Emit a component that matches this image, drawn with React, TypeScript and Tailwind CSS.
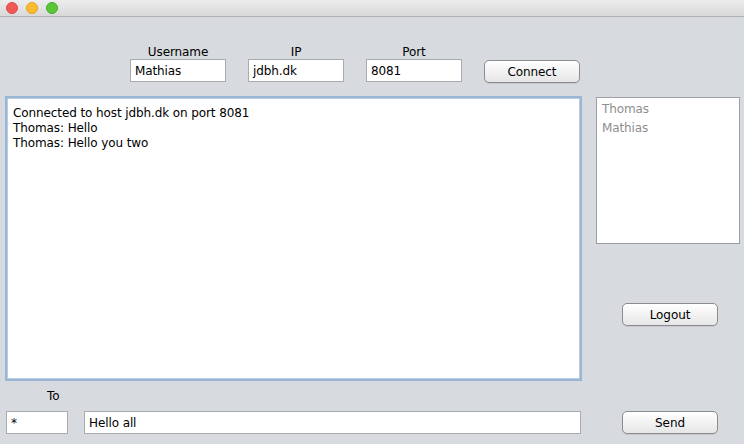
import React from "react";

const font = { fontFamily: '"Lucida Grande", "DejaVu Sans", sans-serif' };

function Field({ value, className }: { value: string; className: string }) {
	return (
		<div
			className={`h-[23px] bg-white border border-[#a9abae] px-[4px] flex items-center text-[12px] text-black ${className}`}
		>
			{value}
		</div>
	);
}

function Button({ label, className }: { label: string; className: string }) {
	return (
		<div
			className={`h-[23px] w-[96px] rounded-[5px] border border-[#8c8c8c] bg-gradient-to-b from-white to-[#e6e6e6] flex items-center justify-center text-[12px] text-black shadow-[0_1px_0_rgba(0,0,0,0.08)] ${className}`}
		>
			{label}
		</div>
	);
}

export default function App() {
	return (
		<div className="w-[744px] h-[444px] bg-[#d7dadf] overflow-hidden tracking-[-0.1px]" style={font}>
			{/* title bar */}
			<div className="h-[17px] bg-gradient-to-b from-[#ededed] to-[#d9d9d9] border-b border-[#b1b1b1] flex items-center gap-[8px] pl-[6px]">
				<span className="w-[12px] h-[12px] rounded-full bg-[#f0595a] border border-[#dd4a4a]" />
				<span className="w-[12px] h-[12px] rounded-full bg-[#fbbb2f] border border-[#e0a325]" />
				<span className="w-[12px] h-[12px] rounded-full bg-[#5ac638] border border-[#48ac2c]" />
			</div>

			{/* connection row */}
			<div className="flex items-end gap-[22px] pl-[130px] pt-[29px]">
				<div className="flex flex-col items-center">
					<span className="text-[12px] leading-[12px] pb-[1px] text-black">Username</span>
					<Field value="Mathias" className="w-[96px]" />
				</div>
				<div className="flex flex-col items-center">
					<span className="text-[12px] leading-[12px] pb-[1px] text-black">IP</span>
					<Field value="jdbh.dk" className="w-[96px]" />
				</div>
				<div className="flex flex-col items-center">
					<span className="text-[12px] leading-[12px] pb-[1px] text-black">Port</span>
					<Field value="8081" className="w-[96px]" />
				</div>
				<Button label="Connect" className="mb-[-1px]" />
			</div>

			{/* chat + users */}
			<div className="flex mt-[14px] pl-[5px]">
				<div className="w-[577px] h-[285px] bg-white border-2 border-[#9ab6d6] shadow-[inset_0_0_0_1px_#b9cce2] px-[6px] pt-[8px] text-[12px] leading-[15px] text-black">
					<div>Connected to host jdbh.dk on port 8081</div>
					<div>Thomas: Hello</div>
					<div>Thomas: Hello you two</div>
				</div>
				<div className="ml-[14px] flex flex-col">
					<div className="mt-[1px] w-[144px] h-[147px] bg-white border border-[#9c9fa3] px-[5px] pt-[2px] text-[12px] leading-[19px] text-[#8e8e8e]">
						<div>Thomas</div>
						<div>Mathias</div>
					</div>
					<Button label="Logout" className="mt-[59px] ml-[26px]" />
				</div>
			</div>

			{/* message row */}
			<div className="pl-[47px] mt-[8px] text-[12px] leading-[15px] text-black">To</div>
			<div className="flex items-center pl-[6px] mt-[7px]">
				<Field value="*" className="w-[62px]" />
				<Field value="Hello all" className="w-[497px] ml-[16px]" />
				<Button label="Send" className="ml-[41px]" />
			</div>
		</div>
	);
}
